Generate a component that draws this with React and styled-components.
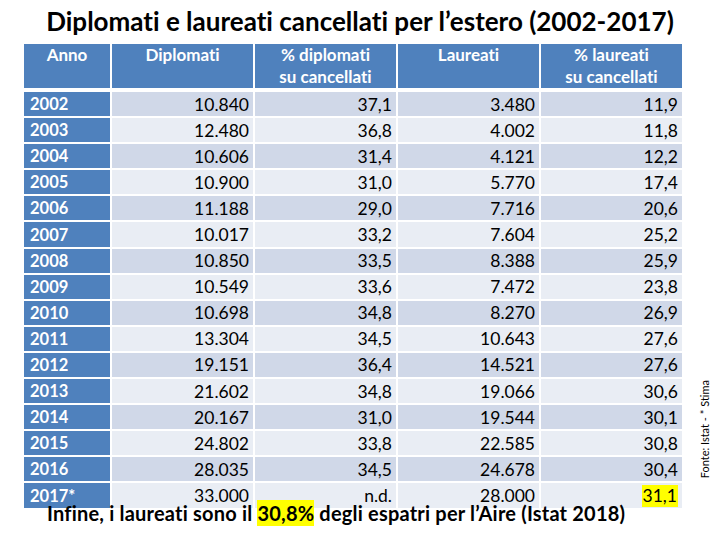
import styled, { createGlobalStyle } from "styled-components";

const rows = [
  ["2002", "10.840", "37,1", "3.480", "11,9"],
  ["2003", "12.480", "36,8", "4.002", "11,8"],
  ["2004", "10.606", "31,4", "4.121", "12,2"],
  ["2005", "10.900", "31,0", "5.770", "17,4"],
  ["2006", "11.188", "29,0", "7.716", "20,6"],
  ["2007", "10.017", "33,2", "7.604", "25,2"],
  ["2008", "10.850", "33,5", "8.388", "25,9"],
  ["2009", "10.549", "33,6", "7.472", "23,8"],
  ["2010", "10.698", "34,8", "8.270", "26,9"],
  ["2011", "13.304", "34,5", "10.643", "27,6"],
  ["2012", "19.151", "36,4", "14.521", "27,6"],
  ["2013", "21.602", "34,8", "19.066", "30,6"],
  ["2014", "20.167", "31,0", "19.544", "30,1"],
  ["2015", "24.802", "33,8", "22.585", "30,8"],
  ["2016", "28.035", "34,5", "24.678", "30,4"],
  ["2017*", "33.000", "n.d.", "28.000", "31,1"],
];

function App() {
  return (
    <Page>
      <GlobalStyle />
      <Title>Diplomati e laureati cancellati per l’estero (2002-2017)</Title>
      <Content>
        <Table>
          <HeadRow>
            <HeadCell>Anno</HeadCell>
            <HeadCell>Diplomati</HeadCell>
            <HeadCell>
              % diplomati
              <br />
              su cancellati
            </HeadCell>
            <HeadCell>Laureati</HeadCell>
            <HeadCell>
              % laureati
              <br />
              su cancellati
            </HeadCell>
          </HeadRow>
          <Body>
            {rows.map((r, i) => (
              <Row key={r[0]} $last={i === rows.length - 1}>
                <YearCell>{r[0]}</YearCell>
                <DataCell $band={i % 2}>{r[1]}</DataCell>
                <DataCell $band={i % 2}>{r[2]}</DataCell>
                <DataCell $band={i % 2}>{r[3]}</DataCell>
                <DataCell $band={i % 2}>
                  {i === rows.length - 1 ? <CellMark>{r[4]}</CellMark> : r[4]}
                </DataCell>
              </Row>
            ))}
          </Body>
        </Table>
        <Side>
          <Source>Fonte: Istat - * Stima</Source>
        </Side>
      </Content>
      <Caption>
        Infine, i laureati sono il <Mark>30,8%</Mark> degli espatri per l’Aire
        (Istat 2018)
      </Caption>
    </Page>
  );
}

export default App;

const GlobalStyle = createGlobalStyle`
  body {
    margin: 0;
    background: #ffffff;
    font-family: Lato, "Open Sans", sans-serif;
    font-variant-ligatures: none;
  }
`;

const Page = styled.div`
  width: 720px;
  height: 540px;
  display: flex;
  flex-direction: column;
  overflow: hidden;
`;

const Title = styled.h1`
  margin: 0;
  height: 44px;
  box-sizing: border-box;
  padding-top: 6px;
  text-align: center;
  font-size: 26px;
  line-height: 1.2;
  font-weight: 700;
  color: #000000;
  white-space: nowrap;
`;

const Content = styled.div`
  display: flex;
  padding-left: 24px;
`;

const Table = styled.div`
  width: 658px;
  display: flex;
  flex-direction: column;
  gap: 5px;
`;

const HeadRow = styled.div`
  display: grid;
  grid-template-columns: 86px repeat(4, 141px);
  column-gap: 2px;
  height: 43px;
`;

const HeadCell = styled.div`
  background: #4f81bd;
  color: #ffffff;
  font-weight: 700;
  font-size: 17px;
  line-height: 22px;
  text-align: center;
`;

const Body = styled.div`
  display: flex;
  flex-direction: column;
  gap: 2px;
`;

const Row = styled.div`
  display: grid;
  grid-template-columns: 86px repeat(4, 141px);
  column-gap: 2px;
  height: ${(p) => (p.$last ? "24.5px" : "24.1px")};
`;

const YearCell = styled.div`
  background: #4f81bd;
  color: #ffffff;
  font-weight: 700;
  font-size: 16.5px;
  padding-left: 6px;
  display: flex;
  align-items: center;
`;

const DataCell = styled.div`
  background: ${(p) => (p.$band ? "#e9edf4" : "#d0d8e8")};
  color: #000000;
  font-size: 17.5px;
  padding-right: 4px;
  display: flex;
  align-items: center;
  justify-content: flex-end;
`;

const CellMark = styled.span`
  display: inline-block;
  background: #ffff00;
  line-height: 22px;
  padding: 0 1px;
`;

const Side = styled.div`
  flex: 1;
  display: flex;
  flex-direction: column;
  justify-content: flex-end;
  align-items: center;
  padding: 0 0 30px 6px;
`;

const Source = styled.div`
  writing-mode: vertical-rl;
  transform: rotate(180deg);
  font-size: 11px;
  color: #000000;
  white-space: nowrap;
`;

const Caption = styled.p`
  position: relative;
  margin: -8px 0 0;
  padding-left: 47px;
  font-size: 20px;
  line-height: 26px;
  font-weight: 700;
  letter-spacing: 0.2px;
  color: #000000;
  white-space: nowrap;
`;

const Mark = styled.span`
  display: inline-block;
  background: #ffff00;
  line-height: 26px;
`;
